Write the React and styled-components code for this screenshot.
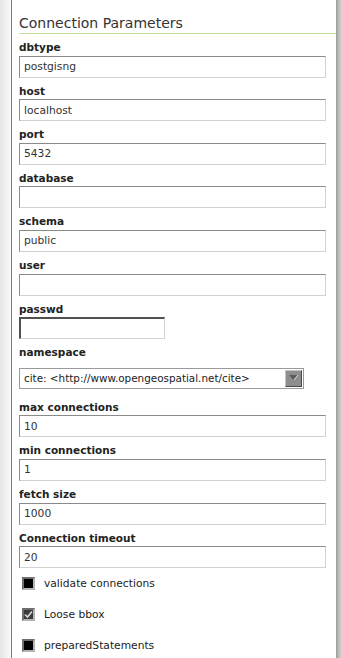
import React from 'react';
import styled, { createGlobalStyle } from 'styled-components';

const GlobalStyle = createGlobalStyle`
  html, body {
    margin: 0;
    padding: 0;
    background: #fff;
  }
  body {
    font-family: "DejaVu Sans", Verdana, sans-serif;
    color: #222;
  }
`;

const Page = styled.div`
  display: flex;
  width: 342px;
  height: 658px;
  overflow: hidden;
`;

const LeftShade = styled.div`
  width: 11px;
  flex: none;
  background: linear-gradient(to right, #e4e4e4, #fbfbfb);
  border-right: 1px solid #7c7c7c;
`;

const RightBar = styled.div`
  width: 6px;
  flex: none;
  background: linear-gradient(to right, #9c9c9c, #c4c4c4 60%, #d6d6d6);
`;

const Panel = styled.div`
  flex: 1;
  padding-left: 7px;
`;

const Title = styled.h2`
  margin: 0;
  padding-top: 14px;
  padding-bottom: 1px;
  line-height: 18px;
  font-size: 14px;
  font-weight: normal;
  color: #333;
  border-bottom: 1px solid #c4de98;
`;

const Field = styled.div`
  display: flex;
  flex-direction: column;
  align-items: flex-start;
`;

const Label = styled.label`
  display: block;
  box-sizing: border-box;
  height: 21.6px;
  padding-top: 6px;
  line-height: 14px;
  font-size: 10.5px;
  font-weight: bold;
  color: #222;
`;

const TextInput = styled.input`
  box-sizing: border-box;
  width: ${p => (p.$short ? '146px' : '307px')};
  height: 22px;
  margin: 0;
  padding: 0 4px;
  border-style: solid;
  border-width: ${p => (p.$short ? '2px 1px 1px 2px' : '1px')};
  border-color: ${p => (p.$short ? '#505050 #d4d4d4 #d4d4d4 #505050' : '#8a8a8a #d2d2d2 #d2d2d2 #8a8a8a')};
  padding-left: ${p => (p.$short ? '3px' : '4px')};
  font-family: "DejaVu Sans", Verdana, sans-serif;
  font-size: 10.7px;
  color: #333;
  background: #fff;
  outline: none;
`;

const SelectBox = styled.div`
  box-sizing: border-box;
  width: 285px;
  height: 21px;
  margin: 7px 0 5px;
  display: flex;
  align-items: center;
  justify-content: space-between;
  padding: 0 1px 0 4px;
  border: 1px solid #9a9a9a;
  font-size: 10.4px;
  color: #222;
  background: #fff;
  white-space: nowrap;
`;

const SelectArrow = styled.span`
  box-sizing: border-box;
  width: 17px;
  height: 17px;
  display: flex;
  align-items: center;
  justify-content: center;
  background: #8e8e8e;
  border: 1px solid;
  border-color: #c4c4c4 #4a4a4a #4a4a4a #c4c4c4;
`;

const CheckRow = styled.div`
  display: flex;
  align-items: center;
  height: 30.8px;
  padding-left: 3px;
  font-size: 10.7px;
  color: #222;
`;

const Box = styled.span`
  box-sizing: border-box;
  width: 13px;
  height: 13px;
  margin-right: 9px;
  display: flex;
  align-items: center;
  justify-content: center;
  border: 2px solid;
  border-color: #6e6e6e #b4b4b4 #b4b4b4 #6e6e6e;
  background: ${p => (p.$checked ? '#3c3c3c' : '#000')};
`;

const fields = [
  ['dbtype', 'postgisng'],
  ['host', 'localhost'],
  ['port', '5432'],
  ['database', ''],
  ['schema', 'public'],
  ['user', ''],
];

const more = [
  ['max connections', '10'],
  ['min connections', '1'],
  ['fetch size', '1000'],
  ['Connection timeout', '20'],
];

const checks = [
  ['validate connections', false],
  ['Loose bbox', true],
  ['preparedStatements', false],
];

function App() {
  return (
    <Page>
      <GlobalStyle />
      <LeftShade />
      <Panel>
        <Title>Connection Parameters</Title>
        {fields.map(([name, value]) => (
          <Field key={name}>
            <Label>{name}</Label>
            <TextInput readOnly value={value} />
          </Field>
        ))}
        <Field>
          <Label>passwd</Label>
          <TextInput $short type="password" readOnly value="" />
        </Field>
        <Field>
          <Label>namespace</Label>
          <SelectBox>
            <span>cite: &lt;http://www.opengeospatial.net/cite&gt;</span>
            <SelectArrow>
              <svg width="9" height="6" viewBox="0 0 9 6">
                <path d="M0 0 H9 L4.5 5 Z" fill="#5a5a5a" />
                <path d="M5 5 L9 0" stroke="#e0e0e0" strokeWidth="1" />
              </svg>
            </SelectArrow>
          </SelectBox>
        </Field>
        {more.map(([name, value]) => (
          <Field key={name}>
            <Label>{name}</Label>
            <TextInput readOnly value={value} />
          </Field>
        ))}
        {checks.map(([name, on]) => (
          <CheckRow key={name}>
            <Box $checked={on}>
              {on && (
                <svg width="9" height="9" viewBox="0 0 9 9">
                  <path d="M1 4.5 L3.5 7 L8 1.5" stroke="#d8d8d8" strokeWidth="1.6" fill="none" />
                </svg>
              )}
            </Box>
            {name}
          </CheckRow>
        ))}
      </Panel>
      <RightBar />
    </Page>
  );
}

export default App;
